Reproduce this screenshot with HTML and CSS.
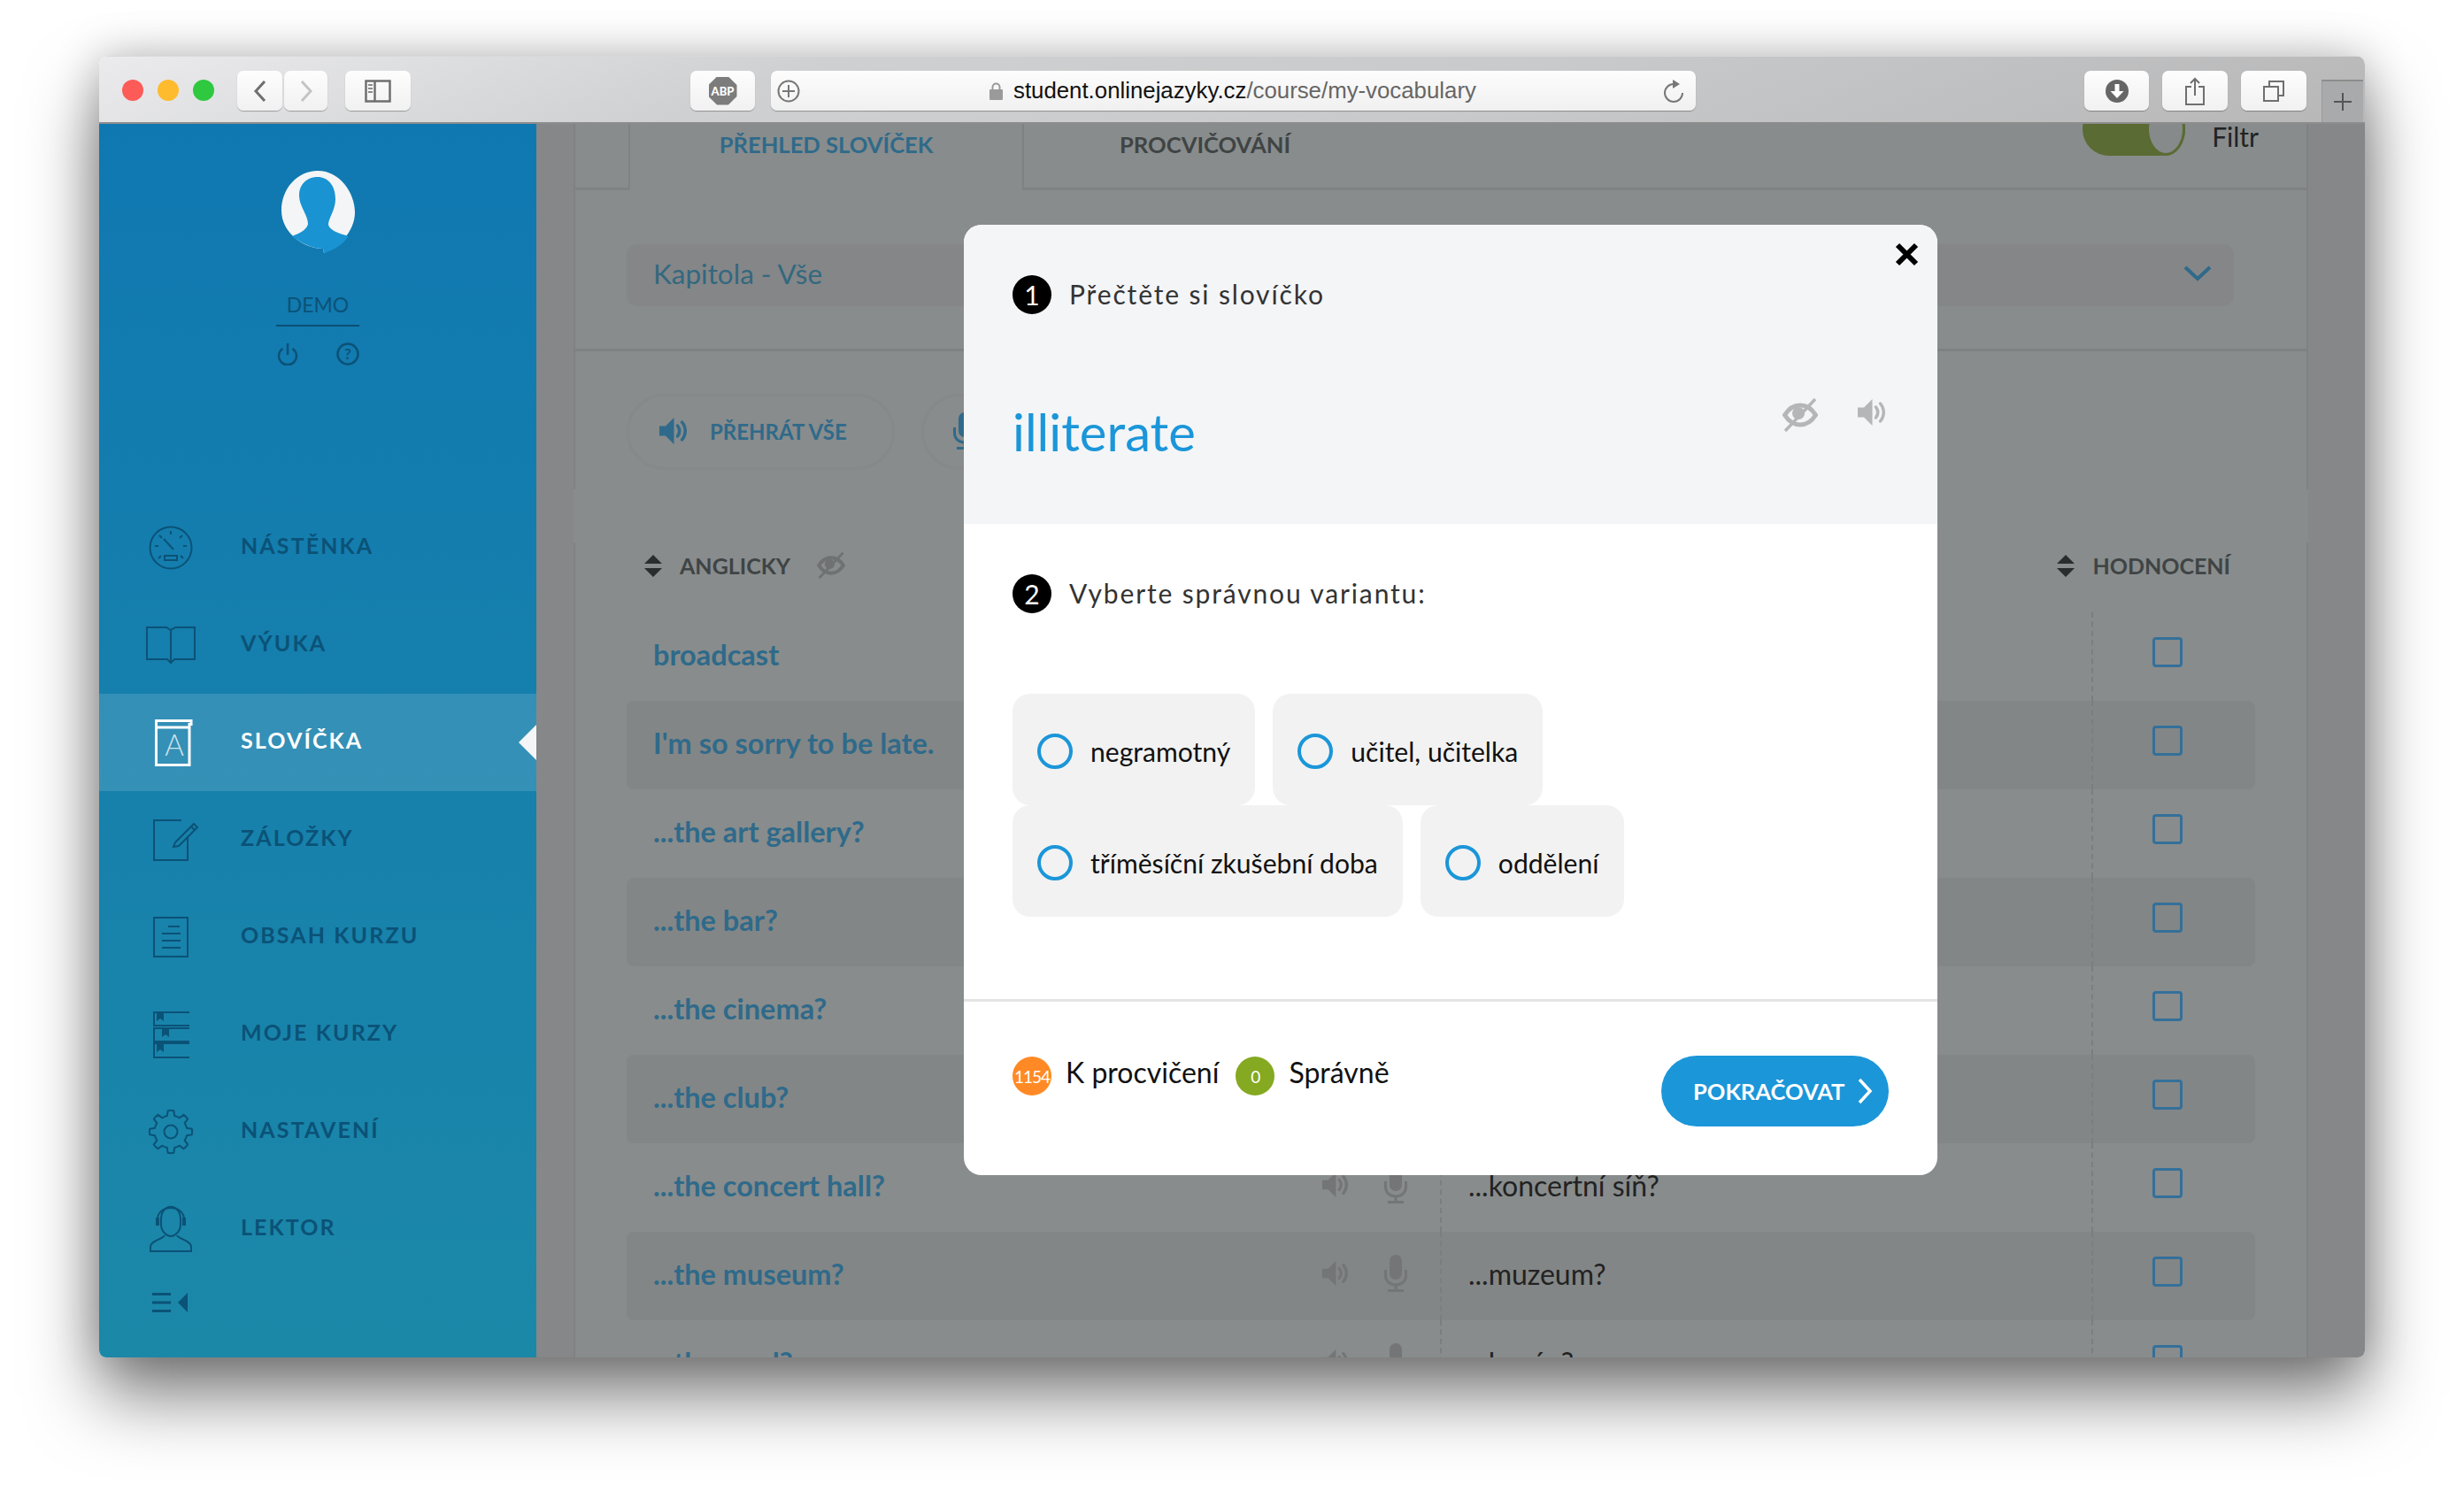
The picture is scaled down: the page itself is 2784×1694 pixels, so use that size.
FILE: index.html
```html
<!DOCTYPE html>
<html lang="cs">
<head>
  <meta charset="UTF-8">
  <title>Slovíčka</title>
  <link rel="stylesheet" href="styles.css">
</head>
<body>
<svg class="defs" width="0" height="0">
  <symbol id="speaker" viewBox="0 0 32 32">
    <path d="M1 10.500h7L17.500 1v30L8 21.500H1z" fill="currentColor"/>
    <path d="M21.500 10c3 4 3 8 0 12M26.500 6c5 6 5 14 0 20" fill="none" stroke="currentColor" stroke-width="3.500" stroke-linecap="round"/>
  </symbol>
  <symbol id="mic" viewBox="0 0 26 42">
    <rect x="6" y="0" width="14" height="28" rx="7" fill="currentColor"/>
    <path d="M1.500 17v6c0 7 5 11 11.500 11s11.500-4 11.500-11v-6M13 34v6M4 40.500h18" fill="none" stroke="currentColor" stroke-width="3"/>
  </symbol>
  <symbol id="eye" viewBox="0 0 40 38">
    <path d="M2.500 19c5-8 11-11 17.500-11s12.500 3 17.500 11c-5 8-11 11-17.500 11S7.500 27 2.500 19z" fill="none" stroke="currentColor" stroke-width="5"/>
    <circle cx="18" cy="17" r="7" fill="currentColor"/>
    <path d="M3 37L37 1" stroke="currentColor" stroke-width="3.500"/>
  </symbol>
  <symbol id="sort" viewBox="0 0 20 25">
    <path d="M10 0l10 10H0zM0 15h20L10 25z" fill="currentColor"/>
  </symbol>
  <symbol id="tooth" viewBox="-29 -31 58 58" overflow="visible">
    <path d="M-7.080-17.090L-4.160-18.030-3.340-23.770Q0-24.500 3.340-23.770L4.160-18.030 7.080-17.090" fill="none" stroke="currentColor" stroke-width="2" stroke-linejoin="round"/>
  </symbol>
</svg>

<div class="window">
  <div class="toolbar">
    <div class="lights">
      <span class="light red"></span>
      <span class="light yellow"></span>
      <span class="light green"></span>
    </div>
    <div class="tb-btn btn-back">
      <svg width="18" height="26" viewBox="0 0 18 26"><path d="M14 2L4 13l10 11" fill="none" stroke="#6f6f6f" stroke-width="3"/></svg>
    </div>
    <div class="tb-btn btn-forward">
      <svg width="18" height="26" viewBox="0 0 18 26"><path d="M4 2l10 11L4 24" fill="none" stroke="#c4c4c4" stroke-width="3"/></svg>
    </div>
    <div class="tb-btn btn-side">
      <svg width="30" height="26" viewBox="0 0 30 26"><path d="M1.500 1.500h27v23h-27zM11.500 1.500v23" fill="none" stroke="#6f6f6f" stroke-width="2.500"/><path d="M4 6h5M4 10h5M4 14h5" stroke="#8a8a8a" stroke-width="2"/></svg>
    </div>
    <div class="tb-btn btn-abp">
      <span class="abp">ABP</span>
    </div>
    <div class="url-field">
      <svg class="url-plus" width="26" height="26" viewBox="0 0 26 26"><circle cx="13" cy="13" r="11.500" fill="none" stroke="#777" stroke-width="2"/><path d="M13 6v14M6 13h14" stroke="#777" stroke-width="2"/></svg>
      <svg class="url-lock" width="15" height="20" viewBox="0 0 15 20"><path d="M3.500 9V5.500a4 4 0 018 0V9" fill="none" stroke="#9a9a9a" stroke-width="2"/><rect y="8" width="15" height="12" rx="1" fill="#9a9a9a"/></svg>
      <span class="url-host">student.onlinejazyky.cz</span><span class="url-path">/course/my-vocabulary</span>
      <svg class="url-reload" width="24" height="26" viewBox="0 0 24 26"><path d="M12 5a10 10 0 1 0 10 10" fill="none" stroke="#777" stroke-width="2"/><path d="M11 0l8 5-8 5z" fill="#777"/></svg>
    </div>
    <div class="tb-btn btn-right first">
      <svg width="26" height="26" viewBox="0 0 26 26"><circle cx="13" cy="13" r="13" fill="#666"/><path d="M10.500 5h5v8h5L13 21l-7.500-8h5z" fill="#fff"/></svg>
    </div>
    <div class="tb-btn btn-right">
      <svg width="24" height="32" viewBox="0 0 24 32"><path d="M8 11H2v20h20V11h-6M12 21V2M7 7l5-5 5 5" fill="none" stroke="#6f6f6f" stroke-width="2"/></svg>
    </div>
    <div class="tb-btn btn-right">
      <svg width="26" height="26" viewBox="0 0 26 26"><path d="M8 7V2h16v16h-6M2 8h16v16H2z" fill="none" stroke="#6f6f6f" stroke-width="2"/></svg>
    </div>
    <div class="new-tab">
      <svg width="22" height="22" viewBox="0 0 22 22"><path d="M11 1v20M1 11h20" stroke="#555" stroke-width="2"/></svg>
    </div>
  </div>

  <div class="app">
    <aside class="sidebar">
      <div class="profile">
        <svg class="avatar" width="83" height="93" viewBox="0 0 83 93">
          <path d="M41 0c25 0 42 25 42 47 0 18-13 36-35 46l-1-5C25 88 0 70 0 45 0 20 18 0 41 0z" fill="#f4f5f6"/>
          <path d="M41 7c11 0 20 9 20 25 0 12-7 20-8 28 0 6 9 10 23 14-8 11-18 16-28 19l-1-5c-12 0-24-6-35-14 10-4 17-8 18-14 0-10-10-20-10-32C20 14 30 7 41 7z" fill="#1a93d3"/>
        </svg>
        <div class="demo">DEMO</div>
        <div class="profile-icons">
          <svg width="24" height="26" viewBox="0 0 24 26"><path d="M12 1v13M6.500 7a10 10 0 1 0 11 0" fill="none" stroke="currentColor" stroke-width="2.500"/></svg>
          <svg width="26" height="26" viewBox="0 0 26 26"><circle cx="13" cy="13" r="11.500" fill="none" stroke="currentColor" stroke-width="2.500"/><text x="13" y="19" class="help-mark">?</text></svg>
        </div>
      </div>
      <nav class="nav">
        <a class="nav-item">
          <svg class="nav-icon" viewBox="0 0 58 58">
            <circle cx="29" cy="31" r="23.500"/>
            <path d="M29 12v4M16 17l3 3M42 17l-3 3M11 29h4M47 29h-4M15 43l3-3M43 43l-3-3M21 21l11 12" />
            <rect x="22" y="40" width="14" height="5"/>
          </svg>
          NÁSTĚNKA
        </a>
        <a class="nav-item">
          <svg class="nav-icon" viewBox="0 0 58 58">
            <path d="M2 11h22l5 3 5-3h22v36H33l-4 4-4-4H2zM29 14v37"/>
          </svg>
          VÝUKA
        </a>
        <a class="nav-item active">
          <svg class="nav-icon" viewBox="0 0 58 58">
            <path d="M12.500 6.500H52v4h-2v46H12.500zM12.500 14H50" stroke-width="3"/>
            <text x="33" y="46" class="icon-letter">A</text>
          </svg>
          SLOVÍČKA
        </a>
        <a class="nav-item">
          <svg class="nav-icon" viewBox="0 0 58 58">
            <path d="M41 9H10v45h38V27M34 34l21-21 4 4-21 21-6 1z"/>
            <path d="M52 16l4 4"/>
          </svg>
          ZÁLOŽKY
        </a>
        <a class="nav-item">
          <svg class="nav-icon" viewBox="0 0 58 58">
            <path d="M10 9h38v44H10zM26 19h13M19 27h21M19 35h21M19 43h21"/>
          </svg>
          OBSAH KURZU
        </a>
        <a class="nav-item">
          <svg class="nav-icon" viewBox="0 0 58 58">
            <path d="M50 6H10v15h40M50 24H10v15h40M50 41H10v16h40"/>
            <path class="solid" d="M13 7h8v9l-4-3-4 3zM19 25h8v9l-4-3-4 3zM13 42h8v9l-4-3-4 3z"/>
          </svg>
          MOJE KURZY
        </a>
        <a class="nav-item">
          <svg class="nav-icon" viewBox="0 0 58 58">
            <g transform="translate(29 31)">
              <use href="#tooth" width="58" height="58" x="-29" y="-31"/>
              <use href="#tooth" width="58" height="58" x="-29" y="-31" transform="rotate(45)"/>
              <use href="#tooth" width="58" height="58" x="-29" y="-31" transform="rotate(90)"/>
              <use href="#tooth" width="58" height="58" x="-29" y="-31" transform="rotate(135)"/>
              <use href="#tooth" width="58" height="58" x="-29" y="-31" transform="rotate(180)"/>
              <use href="#tooth" width="58" height="58" x="-29" y="-31" transform="rotate(225)"/>
              <use href="#tooth" width="58" height="58" x="-29" y="-31" transform="rotate(270)"/>
              <use href="#tooth" width="58" height="58" x="-29" y="-31" transform="rotate(315)"/>
              <circle r="7.500"/>
            </g>
          </svg>
          NASTAVENÍ
        </a>
        <a class="nav-item">
          <svg class="nav-icon" viewBox="0 0 58 58">
            <path d="M18 20c0-19 22-19 22 0v6c0 7-6 13-11 13s-11-6-11-13z"/>
            <path d="M14 22C12 2 46 2 44 22"/>
            <path class="solid" d="M12 18h4v9h-4zM42 18h4v9h-4z"/>
            <path d="M22 38c-1 4-16 6-16 13v5h46v-5c0-7-15-9-16-13"/>
          </svg>
          LEKTOR
        </a>
      </nav>
      <svg class="collapse" width="40" height="22" viewBox="0 0 40 22">
        <path d="M0 1.500h21M0 11h21M0 20.500h21" stroke="currentColor" stroke-width="3"/>
        <path d="M29 11L40 0v22z" fill="currentColor"/>
      </svg>
    </aside>

    <main class="main">
      <div class="content">
        <section class="panel-top">
          <div class="tabs">
            <div class="tab-spacer"></div>
            <div class="tab tab-active">PŘEHLED SLOVÍČEK</div>
            <div class="tab tab-rest">
              <span>PROCVIČOVÁNÍ</span>
              <span class="toggle"><span class="toggle-knob"></span></span>
              <span class="filter-label">Filtr</span>
            </div>
          </div>
          <div class="filter-box">
            <div class="select">
              <span>Kapitola - Vše</span>
              <svg width="32" height="18" viewBox="0 0 32 18"><path d="M2 2l14 13L30 2" fill="none" stroke="#2f6a8a" stroke-width="4"/></svg>
            </div>
          </div>
          <div class="pills">
            <div class="pill">
              <svg class="pill-icon" width="32" height="32"><use href="#speaker"/></svg>
              PŘEHRÁT VŠE
            </div>
            <div class="pill">
              <svg class="pill-icon" width="26" height="42"><use href="#mic"/></svg>
            </div>
          </div>
        </section>

        <section class="panel-list">
          <div class="list-head">
            <div class="col-head col-word">
              <svg class="sort" width="20" height="25"><use href="#sort"/></svg>
              ANGLICKY
              <svg class="head-eye" width="32" height="30"><use href="#eye"/></svg>
            </div>
            <div class="col-head col-rating">
              <svg class="sort" width="20" height="25"><use href="#sort"/></svg>
              HODNOCENÍ
            </div>
          </div>

          <div class="row">
            <div class="cell-word"><a class="word">broadcast</a></div>
            <div class="cell-trans"></div>
            <div class="cell-check"><span class="check"></span></div>
          </div>
          <div class="row striped">
            <div class="cell-word"><a class="word">I'm so sorry to be late.</a></div>
            <div class="cell-trans"></div>
            <div class="cell-check"><span class="check"></span></div>
          </div>
          <div class="row">
            <div class="cell-word"><a class="word">...the art gallery?</a></div>
            <div class="cell-trans"></div>
            <div class="cell-check"><span class="check"></span></div>
          </div>
          <div class="row striped">
            <div class="cell-word"><a class="word">...the bar?</a></div>
            <div class="cell-trans"></div>
            <div class="cell-check"><span class="check"></span></div>
          </div>
          <div class="row">
            <div class="cell-word"><a class="word">...the cinema?</a></div>
            <div class="cell-trans"></div>
            <div class="cell-check"><span class="check"></span></div>
          </div>
          <div class="row striped">
            <div class="cell-word"><a class="word">...the club?</a></div>
            <div class="cell-trans"></div>
            <div class="cell-check"><span class="check"></span></div>
          </div>
          <div class="row">
            <div class="cell-word">
              <a class="word">...the concert hall?</a>
              <span class="row-icons">
                <svg width="30" height="30"><use href="#speaker"/></svg>
                <svg width="26" height="42"><use href="#mic"/></svg>
              </span>
            </div>
            <div class="cell-trans">...koncertní síň?</div>
            <div class="cell-check"><span class="check"></span></div>
          </div>
          <div class="row striped">
            <div class="cell-word">
              <a class="word">...the museum?</a>
              <span class="row-icons">
                <svg width="30" height="30"><use href="#speaker"/></svg>
                <svg width="26" height="42"><use href="#mic"/></svg>
              </span>
            </div>
            <div class="cell-trans">...muzeum?</div>
            <div class="cell-check"><span class="check"></span></div>
          </div>
          <div class="row">
            <div class="cell-word">
              <a class="word">...the pool?</a>
              <span class="row-icons">
                <svg width="30" height="30"><use href="#speaker"/></svg>
                <svg width="26" height="42"><use href="#mic"/></svg>
              </span>
            </div>
            <div class="cell-trans">...bazén?</div>
            <div class="cell-check"><span class="check"></span></div>
          </div>
        </section>
      </div>
    </main>
  </div>

  <div class="modal">
    <svg class="modal-close" width="27" height="27" viewBox="0 0 27 27"><path d="M3 3l21 21M24 3L3 24" stroke="#000" stroke-width="6"/></svg>
    <div class="modal-head">
      <div class="step"><span class="step-num">1</span><span class="step-text">Přečtěte si slovíčko</span></div>
      <div class="word-row">
        <span class="big-word">illiterate</span>
        <span class="word-tools">
          <svg width="40" height="38"><use href="#eye"/></svg>
          <svg width="32" height="32"><use href="#speaker"/></svg>
        </span>
      </div>
    </div>
    <div class="modal-body">
      <div class="step"><span class="step-num">2</span><span class="step-text">Vyberte správnou variantu:</span></div>
      <div class="options">
        <label class="option"><span class="radio"></span>negramotný</label>
        <label class="option"><span class="radio"></span>učitel, učitelka</label>
        <label class="option"><span class="radio"></span>tříměsíční zkušební doba</label>
        <label class="option"><span class="radio"></span>oddělení</label>
      </div>
    </div>
    <div class="modal-foot">
      <span class="badge badge-orange">1154</span>
      <span class="foot-label">K procvičení</span>
      <span class="badge badge-green">0</span>
      <span class="foot-label">Správně</span>
      <button class="btn-continue">
        POKRAČOVAT
        <svg width="18" height="30" viewBox="0 0 18 30"><path d="M3 2l12 13L3 28" fill="none" stroke="#fff" stroke-width="3.500"/></svg>
      </button>
    </div>
  </div>
</div>
</body>
</html>
```
FILE: styles.css
```css
* { box-sizing: border-box; }
html, body { margin: 0; height: 100%; }
body { background: #fff; padding: 63px 0 0 112px; font-family: 'Lato', sans-serif; color: #222; overflow: hidden; }
.defs { position: absolute; }

/* browser window */
.window {
  position: relative;
  width: 2560px;
  height: 1471px;
  border-radius: 10px 10px 8px 8px;
  overflow: hidden;
  box-shadow: 0 44px 80px rgba(0,0,0,0.5), 0 0 50px rgba(0,0,0,0.22);
}
.toolbar {
  display: flex;
  align-items: flex-start;
  height: 77px;
  padding: 16px 0 0 26px;
  background: linear-gradient(160deg, #ebebed 0%, #cfd0d2 30%, #c9cacb 60%, #b7b7b8 100%);
  border-top: 1px solid #d8d8d8;
  border-bottom: 2px solid #8d8d8d;
}
.lights { display: flex; gap: 16px; margin: 10px 26px 0 0; }
.light { width: 24px; height: 24px; border-radius: 50%; }
.red { background: #fc5b57; }
.yellow { background: #febb2e; }
.green { background: #2ec93f; }
.tb-btn {
  display: flex;
  align-items: center;
  justify-content: center;
  height: 45px;
  background: linear-gradient(#fdfdfd, #f1f1f1);
  border-radius: 7px;
  box-shadow: 0 1px 1px rgba(0,0,0,0.3);
}
.btn-back { width: 51px; }
.btn-forward { width: 49px; margin-left: 2px; }
.btn-side { width: 74px; margin-left: 20px; }
.btn-abp { width: 73px; margin-left: 316px; }
.abp {
  width: 32px;
  height: 32px;
  background: #7c7c7c;
  color: #fff;
  font-size: 13px;
  font-weight: 900;
  line-height: 32px;
  text-align: center;
  clip-path: polygon(30% 0, 70% 0, 100% 30%, 100% 70%, 70% 100%, 30% 100%, 0 70%, 0 30%);
}
.url-field {
  display: flex;
  align-items: center;
  width: 1045px;
  height: 45px;
  margin-left: 18px;
  padding: 0 13px 0 7px;
  background: linear-gradient(#fdfdfd, #f0f0f0);
  border-radius: 7px;
  box-shadow: 0 1px 1px rgba(0,0,0,0.3);
  font-family: 'Liberation Sans', sans-serif;
  font-size: 25.800px;
}
.url-lock { margin: 0 12px 0 214px; }
.url-host { color: #111; }
.url-path { color: #666; }
.url-reload { margin-left: auto; }
.btn-right { width: 74px; margin-left: 15px; }
.btn-right.first { width: 73px; margin-left: 439px; }
.new-tab {
  display: flex;
  align-items: center;
  justify-content: center;
  width: 47px;
  height: 48px;
  margin: 10px 0 0 17px;
  background: #a9aaab;
  border-top: 2px solid #8d8d8d;
  border-left: 1px solid #9a9a9a;
}

/* app under the dialog */
.app { display: flex; height: 1394px; }
.sidebar {
  flex: none;
  width: 494px;
  background: linear-gradient(#1078b1, #1c88a8);
  color: #0b5277;
}
.profile { display: flex; flex-direction: column; align-items: center; height: 424px; padding: 53px 0 0; }
.avatar { margin-left: 1px; }
.demo { width: 94px; margin-top: 44px; padding-bottom: 9px; border-bottom: 2px solid #0a4f75; font-size: 23px; text-align: center; }
.profile-icons { display: flex; gap: 43px; margin-top: 18px; }
.help-mark { fill: currentColor; font-size: 17px; font-weight: 700; text-anchor: middle; }
.nav-item {
  display: flex;
  align-items: center;
  height: 110px;
  padding: 0 0 7px 52px;
  font-size: 25px;
  font-weight: 700;
  letter-spacing: 2.100px;
}
.nav-item.active { position: relative; background: rgba(255,255,255,0.13); color: #fff; }
.nav-item.active::after {
  content: "";
  position: absolute;
  right: 0;
  top: 35px;
  border: 20px solid transparent;
  border-right-color: #f4f5f6;
  border-left-width: 0;
}
.nav-icon {
  flex: none;
  width: 58px;
  height: 58px;
  margin: 2px 50px 0 0;
  overflow: visible;
  fill: none;
  stroke: currentColor;
  stroke-width: 2;
}
.nav-icon .solid { fill: currentColor; stroke: none; }
.icon-letter { fill: #cfe3ed; stroke: none; font-size: 33px; font-weight: 300; letter-spacing: 0; text-anchor: middle; }
.collapse { display: block; margin: 17px 0 0 60px; }

.main { flex: 1; min-width: 0; overflow: hidden; padding: 0 64px 0 42px; background: #868788; }
.content { height: 100%; background: #888c8c; }
.panel-top { height: 413px; border: solid #7f8283; border-width: 0 2px; }
.tabs { display: flex; height: 75px; }
.tab-spacer { width: 60px; border-bottom: 3px solid #7f8283; }
.tab { padding-top: 8px; font-size: 25.600px; line-height: 30px; font-weight: 700; }
.tab-active { width: 447px; border: solid #7f8283; border-width: 0 2px; color: #2f6a8a; text-align: center; }
.tab-rest { display: flex; flex: 1; padding-left: 108px; border-bottom: 3px solid #7f8283; color: #3f4444; }
.toggle {
  display: flex;
  justify-content: flex-end;
  width: 116px;
  height: 60px;
  margin: -32px 0 0 auto;
  background: #5a6b33;
  border-radius: 30px;
}
.toggle-knob { width: 44px; height: 60px; background: #868a8a; border-radius: 50%; border: 3px solid #5a6b33; }
.filter-label { margin: -6px 54px 0 30px; font-size: 30px; line-height: 24px; font-weight: 400; color: #222; }
.filter-box { height: 182px; padding: 61px 82px 0 58px; border-bottom: 3px solid #7f8283; }
.select {
  display: flex;
  align-items: center;
  justify-content: space-between;
  height: 70px;
  padding: 0 25px 5px 30px;
  background: #858688;
  border-radius: 12px;
  color: #33687f;
  font-size: 31.500px;
}
.pills { display: flex; gap: 30px; padding: 48px 0 0 58px; }
.pill {
  display: flex;
  align-items: center;
  width: 303px;
  height: 86px;
  padding: 0 0 2px 33px;
  border: 3px solid #868889;
  border-radius: 43px;
  color: #2f6a8a;
  font-size: 24px;
  font-weight: 700;
}
.pill-icon { margin-right: 26px; }
.panel-list { margin-top: 60px; height: 940px; border: solid #7f8283; border-width: 0 2px; }
.list-head { display: flex; height: 79px; }
.col-head { display: flex; align-items: center; height: 52px; color: #3f4445; font-size: 25px; font-weight: 700; }
.col-word { padding-left: 78px; }
.col-rating { margin-left: auto; margin-right: 86px; }
.sort { margin-right: 20px; color: #2a2d2e; }
.head-eye { margin-left: 30px; color: #6f7172; }

.row { display: flex; width: 1840px; height: 100px; margin-left: 58px; border-radius: 8px; }
.striped { background: #838686; }
.cell-word { display: flex; align-items: center; width: 919px; padding: 0 37px 6px 30px; }
.word { color: #2f6a8a; font-size: 32.500px; font-weight: 700; }
.row-icons { display: flex; align-items: center; gap: 41px; margin-left: auto; color: #737576; }
.cell-trans { display: flex; align-items: center; width: 736px; padding: 0 0 6px 30px; border-left: 2px dashed #7b7d7e; font-size: 32px; color: #222; }
.cell-check { flex: 1; padding: 28px 0 0 67px; border-left: 2px dashed #7b7d7e; }
.check { display: block; width: 34px; height: 34px; border: 3px solid #34709a; border-radius: 4px; }

/* dialog */
.modal {
  position: absolute;
  left: 977px;
  top: 191px;
  display: flex;
  flex-direction: column;
  width: 1100px;
  height: 1074px;
  background: #fff;
  border-radius: 20px;
  overflow: hidden;
}
.modal-close { position: absolute; top: 20px; right: 21px; }
.modal-head { height: 338px; padding: 57px 59px 0 55px; background: #f4f5f7; }
.step { display: flex; align-items: center; height: 44px; color: #333; font-size: 30px; }
.step-text { margin-bottom: 3px; letter-spacing: 1.850px; }
.step-num {
  display: flex;
  align-items: center;
  justify-content: center;
  width: 44px;
  height: 44px;
  margin-right: 20px;
  background: #000;
  border-radius: 50%;
  color: #fff;
}
.word-row { display: flex; justify-content: space-between; margin-top: 95px; }
.big-word { color: #1b96d9; font-size: 58px; line-height: 76px; }
.word-tools { display: flex; gap: 44px; color: #b5b6b7; }
.modal-body { height: 540px; padding: 57px 55px 0; border-bottom: 3px solid #e4e4e4; }
.options { display: flex; flex-wrap: wrap; column-gap: 20px; margin-top: 91px; }
.option {
  display: flex;
  align-items: center;
  height: 126px;
  padding: 4px 28px 0;
  background: #f2f2f2;
  border-radius: 20px;
  color: #111;
  font-size: 30.100px;
}
.radio { width: 40px; height: 40px; margin-right: 20px; border: 4px solid #1b96d9; border-radius: 50%; }
.modal-foot { display: flex; align-items: flex-start; flex: 1; padding: 62px 55px 0; }
.badge {
  display: flex;
  align-items: center;
  justify-content: center;
  width: 44px;
  height: 44px;
  margin-right: 16px;
  border-radius: 50%;
  color: #fff;
  font-size: 19px;
  letter-spacing: -1px;
}
.badge-orange { background: #ff8a25; }
.badge-green { background: #85a921; }
.foot-label { margin-right: 19px; color: #111; font-size: 32px; line-height: 36px; }
.btn-continue {
  display: flex;
  align-items: center;
  gap: 14px;
  width: 257px;
  height: 80px;
  margin: -1px 0 0 auto;
  padding: 0 0 0 36px;
  background: #1b96d9;
  border: none;
  border-radius: 40px;
  color: #fff;
  font-family: inherit;
  font-size: 25.500px;
  font-weight: 700;
}
```
